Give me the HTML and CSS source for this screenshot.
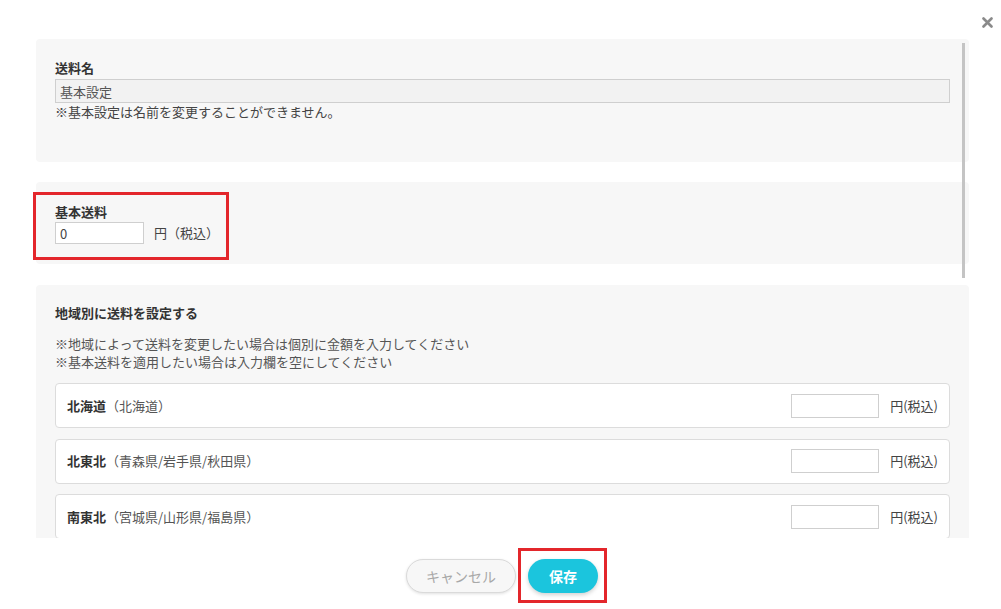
FILE: index.html
```html
<!DOCTYPE html>
<html lang="ja">
<head>
<meta charset="utf-8">
<title>送料設定</title>
<link rel="stylesheet" href="styles.css">
</head>
<body>
<div class="modal">
  <button class="close" aria-label="閉じる">
    <svg width="11" height="11" viewBox="0 0 11 11"><path d="M1.5 1.5 L9.5 9.5 M9.5 1.5 L1.5 9.5" stroke="#8a8a8a" stroke-width="2.6" stroke-linecap="round"/></svg>
  </button>
  <div class="scroll">
    <section class="panel panel-name">
      <div class="label">送料名</div>
      <input class="field field-wide" type="text" value="基本設定" readonly>
      <div class="note">※基本設定は名前を変更することができません。</div>
    </section>
    <section class="panel panel-base">
      <div class="label">基本送料</div>
      <div class="inline">
        <input class="field field-base" type="text" value="0">
        <span class="unit">円（税込）</span>
      </div>
      <span class="highlight highlight-base"></span>
    </section>
    <section class="panel panel-region">
      <div class="label">地域別に送料を設定する</div>
      <div class="notes">
        <div>※地域によって送料を変更したい場合は個別に金額を入力してください</div>
        <div>※基本送料を適用したい場合は入力欄を空にしてください</div>
      </div>
      <div class="rows">
        <div class="row">
          <div class="row-label"><b>北海道</b>（北海道）</div>
          <div class="row-input"><input class="field field-row" type="text"><span class="unit">円(税込)</span></div>
        </div>
        <div class="row">
          <div class="row-label"><b>北東北</b>（青森県/岩手県/秋田県）</div>
          <div class="row-input"><input class="field field-row" type="text"><span class="unit">円(税込)</span></div>
        </div>
        <div class="row">
          <div class="row-label"><b>南東北</b>（宮城県/山形県/福島県）</div>
          <div class="row-input"><input class="field field-row" type="text"><span class="unit">円(税込)</span></div>
        </div>
      </div>
    </section>
    <div class="scrollbar"></div>
  </div>
  <div class="footer">
    <button class="btn btn-cancel">キャンセル</button>
    <button class="btn btn-save">保存</button>
  </div>
</div>
</body>
</html>
```

FILE: styles.css
```css
* { box-sizing: border-box; }
html, body { margin: 0; padding: 0; background: #fff; }
body {
  font-family: "Noto Sans CJK JP", "Noto Sans", "Liberation Sans", sans-serif;
  font-size: 13px;
  line-height: 18px;
  color: #333;
}
.modal {
  position: relative;
  width: 1001px;
  height: 609px;
  padding-top: 39px;
  overflow: hidden;
}
.close {
  position: absolute;
  top: 17px;
  right: 8px;
  width: 11px;
  height: 11px;
  padding: 0;
  border: 0;
  background: none;
  display: flex;
}
.scroll {
  position: relative;
  margin-left: 33px;
  padding-left: 3px;
  width: 936px;
  height: 499px;
  overflow: hidden;
  display: flex;
  flex-direction: column;
}
.panel {
  position: relative;
  flex: none;
  background: #f7f7f7;
  border-radius: 4px;
  padding: 0 19px;
}
.panel-name { padding-top: 20px; padding-bottom: 41px; }
.panel-base { margin-top: 20px; padding-top: 21px; padding-bottom: 20px; }
.panel-region { margin-top: 21px; padding-top: 19px; padding-bottom: 20px; }
.label { font-weight: bold; color: #333; }
.field {
  display: block;
  font: inherit;
  font-size: 13px;
  color: #444;
  border: 1px solid #cfcfcf;
  background: #fff;
  outline: none;
  padding: 0 4px;
  margin: 0;
}
.field-wide {
  width: 100%;
  height: 24px;
  margin-top: 2px;
  background: #f2f2f2;
  color: #555;
}
.note { color: #444; }
.inline {
  display: flex;
  align-items: center;
  margin-top: 1px;
}
.field-base { width: 89px; height: 22px; }
.unit { color: #444; }
.inline .unit { margin-left: 10px; }
.highlight {
  position: absolute;
  border: 3px solid #e3262b;
}
.highlight-base {
  left: -3px;
  top: 10px;
  width: 196px;
  height: 68px;
}
.notes { margin-top: 13px; color: #555; }
.rows {
  margin-top: 12px;
  display: flex;
  flex-direction: column;
  gap: 10.5px;
}
.row {
  height: 45px;
  background: #fff;
  border: 1px solid #dcdcdc;
  border-radius: 4px;
  padding: 0 11px 0 11px;
  display: flex;
  align-items: center;
  justify-content: space-between;
}
.row-label { color: #555; }
.row-label b { color: #333; }
.row-input { display: flex; align-items: center; }
.field-row { width: 88px; height: 24px; margin-right: 11px; }
.scrollbar {
  position: absolute;
  left: 929px;
  top: 4px;
  width: 3px;
  height: 235px;
  background: #c4c4c4;
}
.footer {
  display: flex;
  justify-content: center;
  gap: 12px;
  padding-top: 21px;
  padding-left: 3px;
}
.btn {
  position: relative;
  height: 34px;
  border-radius: 17px;
  font-family: inherit;
  font-size: 14px;
  padding: 0;
  cursor: pointer;
}
.btn-cancel {
  width: 110px;
  background: #f7f7f7;
  border: 1px solid #dadada;
  color: #a8a8a8;
  box-shadow: 0 1px 3px rgba(0,0,0,0.12);
}
.btn-save {
  width: 70px;
  background: #1bc5dd;
  border: 0;
  color: #fff;
  font-weight: bold;
  box-shadow: 0 2px 4px rgba(0,0,0,0.18);
}
.btn-save::after {
  content: "";
  position: absolute;
  left: -10px;
  top: -11px;
  right: -9px;
  bottom: -10px;
  border: 3px solid #e3262b;
}
```
